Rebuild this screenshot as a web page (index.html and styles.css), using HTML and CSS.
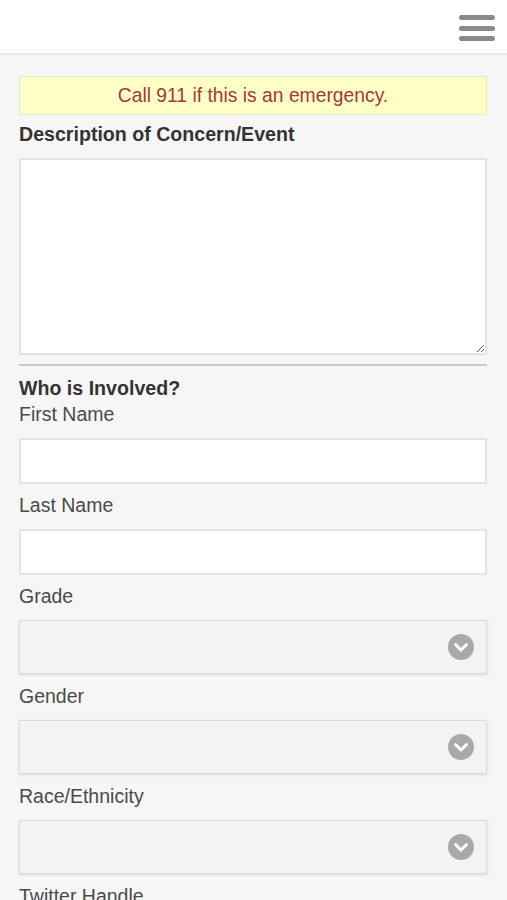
FILE: index.html
```html
<!DOCTYPE html>
<html>
<head>
<meta charset="utf-8">
<link rel="stylesheet" href="styles.css">
</head>
<body>
<header class="topbar">
  <button class="menu" aria-label="Menu"><span></span><span></span><span></span></button>
</header>
<main class="content">
  <div class="alert">Call 911 if this is an emergency.</div>
  <div class="field">
    <label class="heading">Description of Concern/Event</label>
    <textarea class="textarea"></textarea>
  </div>
  <hr class="divider">
  <h2 class="heading section">Who is Involved?</h2>
  <div class="field">
    <label class="label">First Name</label>
    <input class="input" type="text">
  </div>
  <div class="field">
    <label class="label">Last Name</label>
    <input class="input" type="text">
  </div>
  <div class="field">
    <label class="label">Grade</label>
    <div class="select"><span class="chev"><svg viewBox="0 0 26 26" width="26" height="26"><circle cx="13" cy="13" r="13" fill="#a9a9a9"/><path d="M7.5 10.5 L13 16 L18.5 10.5" fill="none" stroke="#fff" stroke-width="3" stroke-linecap="round" stroke-linejoin="round"/></svg></span></div>
  </div>
  <div class="field">
    <label class="label">Gender</label>
    <div class="select"><span class="chev"><svg viewBox="0 0 26 26" width="26" height="26"><circle cx="13" cy="13" r="13" fill="#a9a9a9"/><path d="M7.5 10.5 L13 16 L18.5 10.5" fill="none" stroke="#fff" stroke-width="3" stroke-linecap="round" stroke-linejoin="round"/></svg></span></div>
  </div>
  <div class="field">
    <label class="label">Race/Ethnicity</label>
    <div class="select"><span class="chev"><svg viewBox="0 0 26 26" width="26" height="26"><circle cx="13" cy="13" r="13" fill="#a9a9a9"/><path d="M7.5 10.5 L13 16 L18.5 10.5" fill="none" stroke="#fff" stroke-width="3" stroke-linecap="round" stroke-linejoin="round"/></svg></span></div>
  </div>
  <div class="field">
    <label class="label">Twitter Handle</label>
    <input class="input" type="text">
  </div>
</main>
</body>
</html>
```
FILE: styles.css
```css
* { box-sizing: border-box; }
html, body { margin: 0; padding: 0; }
body {
  background: #f6f6f6;
  font-family: "Liberation Sans", Arial, sans-serif;
  font-size: 19.5px;
  color: #444;
  width: 507px;
  overflow: hidden;
}
.topbar {
  height: 55px;
  background: #fff;
  border-bottom: 2px solid #e8e8e8;
  display: flex;
  justify-content: flex-end;
  align-items: flex-start;
  padding: 15px 12px 0 0;
}
.menu {
  width: 36px;
  padding: 0;
  border: 0;
  background: none;
  display: flex;
  flex-direction: column;
  gap: 5.5px;
}
.menu span {
  display: block;
  height: 5px;
  border-radius: 3px;
  background: #8a8a8a;
}
.content {
  padding: 21px 20px 0 19px;
}
.alert {
  height: 39px;
  background: #ffffc6;
  border: 1px solid #e9e9c4;
  color: #a33a36;
  text-align: center;
  line-height: 37px;
  font-size: 19.3px;
  margin-bottom: 7px;
}
.field {
  display: flex;
  flex-direction: column;
  gap: 12px;
  margin-bottom: 9px;
}
.heading {
  font-weight: bold;
  color: #333;
  font-size: 19.6px;
  line-height: 24px;
  margin: 0;
}
.section { margin: 0 0 2px; }
.label {
  line-height: 24px;
  color: #4a4a4a;
}
.textarea {
  height: 197px;
  background: #fff;
  border: 2px solid #e4e4e4;
  border-radius: 0;
  resize: vertical;
  font: inherit;
  margin: 0;
}
.divider {
  border: 0;
  height: 2px;
  background: #c9c9c9;
  margin: 1px 0 10px;
}
.input {
  height: 46px;
  background: #fff;
  border: 2px solid #e4e4e4;
  border-radius: 0;
  font: inherit;
  margin: 0;
}
.select {
  height: 54px;
  background: #f3f3f3;
  border: 1px solid #dcdcdc;
  box-shadow: 0 1px 3px rgba(0,0,0,0.12);
  display: flex;
  align-items: center;
  justify-content: flex-end;
  padding-right: 12px;
  margin-bottom: 1px;
}
.chev { display: flex; }
```
